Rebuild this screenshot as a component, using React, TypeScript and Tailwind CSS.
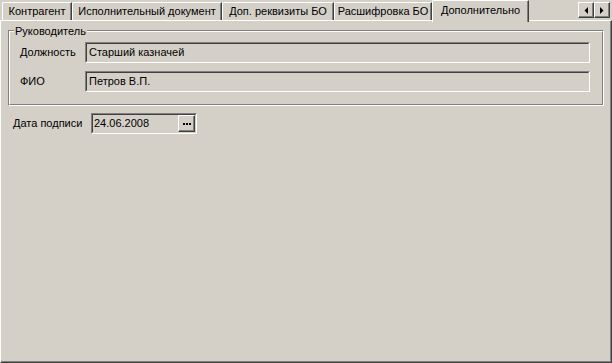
import React from 'react';

const tabs = [
  { label: 'Контрагент', w: 'w-[70px]' },
  { label: 'Исполнительный документ', w: 'w-[150px]' },
  { label: 'Доп. реквизиты БО', w: 'w-[112px]' },
  { label: 'Расшифровка БО', w: 'w-[98px]' },
];

const Sunken: React.FC<{ className?: string; children?: React.ReactNode }> = ({ className = '', children }) => (
  <div className={`border border-t-[#808080] border-l-[#808080] border-r-white border-b-white ${className}`}>
    <div className="h-full border border-t-[#404040] border-l-[#404040] border-r-[#d4d0c8] border-b-[#d4d0c8] flex items-center">
      {children}
    </div>
  </div>
);

const Arrow: React.FC<{ dir: 'left' | 'right' }> = ({ dir }) => (
  <div className="w-[16px] h-[16px] border border-t-white border-l-white border-r-[#404040] border-b-[#404040] shadow-[inset_-1px_-1px_0_#808080] flex items-center justify-center">
    <svg width="4" height="7" viewBox="0 0 4 7">
      {dir === 'left' ? <polygon points="4,0 4,7 0.5,3.5" fill="#000" /> : <polygon points="0,0 0,7 3.5,3.5" fill="#000" />}
    </svg>
  </div>
);

export default function App() {
  return (
    <div className="w-[612px] h-[363px] bg-[#d4d0c8] flex flex-col text-[11px] text-black font-['Liberation_Sans',sans-serif] leading-none select-none">
      <div className="h-[20px] flex items-end pl-[2px] shrink-0">
        {tabs.map(t => (
          <div
            key={t.label}
            className={`${t.w} h-[18px] border-t border-l border-r border-t-white border-l-white border-r-[#404040] shadow-[inset_-1px_0_0_#808080] rounded-tl-[2px] flex items-center justify-center pb-[1px]`}
          >
            {t.label}
          </div>
        ))}
        <div className="relative z-10 w-[97px] h-[22px] -mb-[2px] bg-[#d4d0c8] border-t border-l border-r border-t-white border-l-white border-r-[#404040] shadow-[inset_-1px_0_0_#808080] rounded-tl-[2px] flex items-start justify-center pt-[4px]">
          Дополнительно
        </div>
        <div className="ml-auto mr-[2px] self-start mt-[2px] flex">
          <Arrow dir="left" />
          <Arrow dir="right" />
        </div>
      </div>

      <div className="flex-1 border-l border-t border-r border-b border-l-white border-t-white border-r-[#404040] border-b-[#404040] shadow-[inset_-1px_-1px_0_#808080] flex flex-col">
        <div className="relative mt-[9px] mx-[7px] h-[76px] border border-t-[#808080] border-l-[#808080] border-r-white border-b-white">
          <div className="h-full border border-t-white border-l-white border-r-[#808080] border-b-[#808080] flex flex-col gap-[8px] pt-[10px] pl-[10px]">
            <div className="flex items-center">
              <div className="w-[65px]">Должность</div>
              <Sunken className="w-[505px] h-[21px]">
                <span className="pl-[2px]">Старший казначей</span>
              </Sunken>
            </div>
            <div className="flex items-center">
              <div className="w-[65px]">ФИО</div>
              <Sunken className="w-[505px] h-[21px]">
                <span className="pl-[2px]">Петров В.П.</span>
              </Sunken>
            </div>
          </div>
          <div className="absolute left-[5px] top-[-5px] bg-[#d4d0c8] px-[1px]">Руководитель</div>
        </div>

        <div className="flex items-center mt-[7px] ml-[12px]">
          <div className="w-[78px]">Дата подписи</div>
          <Sunken className="w-[106px] h-[21px]">
            <span className="pl-[1px] flex-1">24.06.2008</span>
            <div className="w-[17px] h-[17px] border border-t-white border-l-white border-r-[#404040] border-b-[#404040] shadow-[inset_-1px_-1px_0_#808080] flex items-center justify-center gap-[1px]">
              <span className="w-[2px] h-[2px] bg-black" />
              <span className="w-[2px] h-[2px] bg-black" />
              <span className="w-[2px] h-[2px] bg-black" />
            </div>
          </Sunken>
        </div>
      </div>
    </div>
  );
}
